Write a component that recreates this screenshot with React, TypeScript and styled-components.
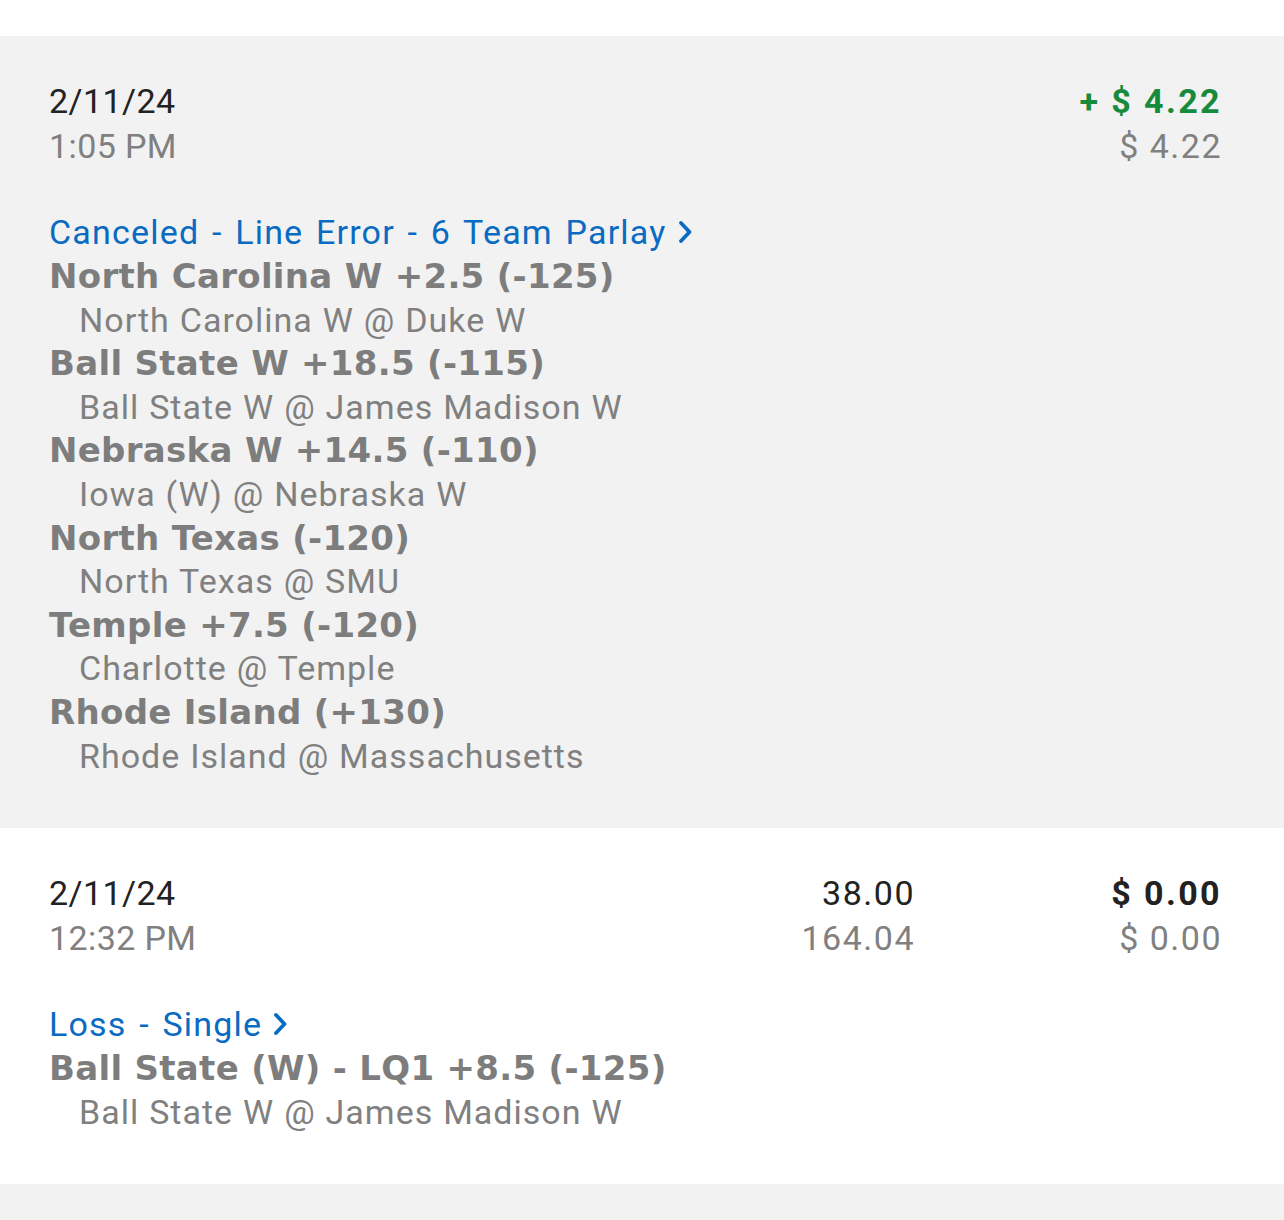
import React from 'react'
import styled, { createGlobalStyle } from 'styled-components'

const GlobalStyle = createGlobalStyle`
  html, body {
    margin: 0;
    padding: 0;
    background: #f2f2f2;
  }
  body {
    font-family: Roboto, "Noto Sans", Arial, sans-serif;
  }
`

interface ILeg {
  pick: string
  game: string
}

interface IBet {
  date: string
  time: string
  title: string
  legs: ILeg[]
  risk?: { top: string; bottom: string }
  result: { top: string; bottom: string; tone: 'win' | 'neutral' }
  shaded: boolean
}

const bets: IBet[] = [
  {
    date: '2/11/24',
    time: '1:05 PM',
    title: 'Canceled - Line Error - 6 Team Parlay',
    shaded: true,
    result: { top: '+ $ 4.22', bottom: '$ 4.22', tone: 'win' },
    legs: [
      { pick: 'North Carolina W +2.5 (-125)', game: 'North Carolina W @ Duke W' },
      { pick: 'Ball State W +18.5 (-115)', game: 'Ball State W @ James Madison W' },
      { pick: 'Nebraska W +14.5 (-110)', game: 'Iowa (W) @ Nebraska W' },
      { pick: 'North Texas (-120)', game: 'North Texas @ SMU' },
      { pick: 'Temple +7.5 (-120)', game: 'Charlotte @ Temple' },
      { pick: 'Rhode Island (+130)', game: 'Rhode Island @ Massachusetts' },
    ],
  },
  {
    date: '2/11/24',
    time: '12:32 PM',
    title: 'Loss - Single',
    shaded: false,
    risk: { top: '38.00', bottom: '164.04' },
    result: { top: '$ 0.00', bottom: '$ 0.00', tone: 'neutral' },
    legs: [
      { pick: 'Ball State (W) - LQ1 +8.5 (-125)', game: 'Ball State W @ James Madison W' },
    ],
  },
]

const Page = styled.div`
  padding-top: 36px;
  padding-bottom: 40px;
  background: #f2f2f2;
  box-shadow: inset 0 36px 0 #ffffff;
`

const Card = styled.section<{ shaded: boolean }>`
  background: ${p => (p.shaded ? '#f2f2f2' : '#ffffff')};
  padding: 43px 62px 50px 49px;
`

const Header = styled.div`
  display: flex;
  align-items: flex-start;
`

const Column = styled.div<{ align?: 'left' | 'right'; grow?: boolean; width?: number }>`
  display: flex;
  flex-direction: column;
  text-align: ${p => (p.align === 'right' ? 'right' : 'left')};
  flex: ${p => (p.grow ? '1 1 auto' : '0 0 auto')};
  ${p => (p.width ? `width: ${p.width}px;` : '')}
`

const Line = styled.div<{ tone?: 'dark' | 'muted' | 'win'; bold?: boolean; amount?: boolean }>`
  font-size: 34px;
  line-height: 45px;
  font-weight: ${p => (p.bold ? 700 : 400)};
  letter-spacing: ${p => (p.amount ? (p.bold ? '2.4px' : '1.5px') : '0.4px')};
  color: ${p =>
    p.tone === 'win' ? '#188a3b' : p.tone === 'muted' ? '#808080' : '#222222'};
  white-space: nowrap;
`

const Body = styled.div`
  margin-top: 40px;
  display: flex;
  flex-direction: column;
`

const TitleLink = styled.a`
  display: inline-flex;
  align-items: center;
  gap: 10px;
  font-size: 34px;
  line-height: 46px;
  letter-spacing: 1.2px;
  word-spacing: 3px;
  color: #0a6bc2;
  text-decoration: none;
  cursor: pointer;
  align-self: flex-start;
`

const Pick = styled.div`
  font-family: "DejaVu Sans", "Open Sans", sans-serif;
  font-size: 34px;
  line-height: 43.6px;
  font-weight: 700;
  color: #7d7d7d;
  letter-spacing: 0.3px;
`

const Game = styled.div`
  font-size: 34px;
  line-height: 43.6px;
  color: #808080;
  padding-left: 30px;
  letter-spacing: 1px;
  word-spacing: 0.5px;
`

const Chevron = () => (
  <svg width="18" height="26" viewBox="0 0 18 26" fill="none">
    <path
      d="M4 4 L12.5 13 L4 22"
      stroke="#0a6bc2"
      strokeWidth="3.8"
      strokeLinecap="round"
      strokeLinejoin="round"
    />
  </svg>
)

const BetCard = ({ bet }: { bet: IBet }) => (
  <Card shaded={bet.shaded}>
    <Header>
      <Column grow>
        <Line>{bet.date}</Line>
        <Line tone="muted">{bet.time}</Line>
      </Column>
      {bet.risk && (
        <Column align="right" width={200}>
          <Line amount>{bet.risk.top}</Line>
          <Line amount tone="muted">{bet.risk.bottom}</Line>
        </Column>
      )}
      <Column align="right" width={bet.risk ? 307 : undefined}>
        <Line amount bold tone={bet.result.tone === 'win' ? 'win' : 'dark'}>
          {bet.result.top}
        </Line>
        <Line amount tone="muted">{bet.result.bottom}</Line>
      </Column>
    </Header>
    <Body>
      <TitleLink>
        {bet.title}
        <Chevron />
      </TitleLink>
      {bet.legs.map(leg => (
        <React.Fragment key={leg.pick}>
          <Pick>{leg.pick}</Pick>
          <Game>{leg.game}</Game>
        </React.Fragment>
      ))}
    </Body>
  </Card>
)

export default function App() {
  return (
    <>
      <GlobalStyle />
      <Page>
        {bets.map((bet, i) => (
          <BetCard key={i} bet={bet} />
        ))}
      </Page>
    </>
  )
}
